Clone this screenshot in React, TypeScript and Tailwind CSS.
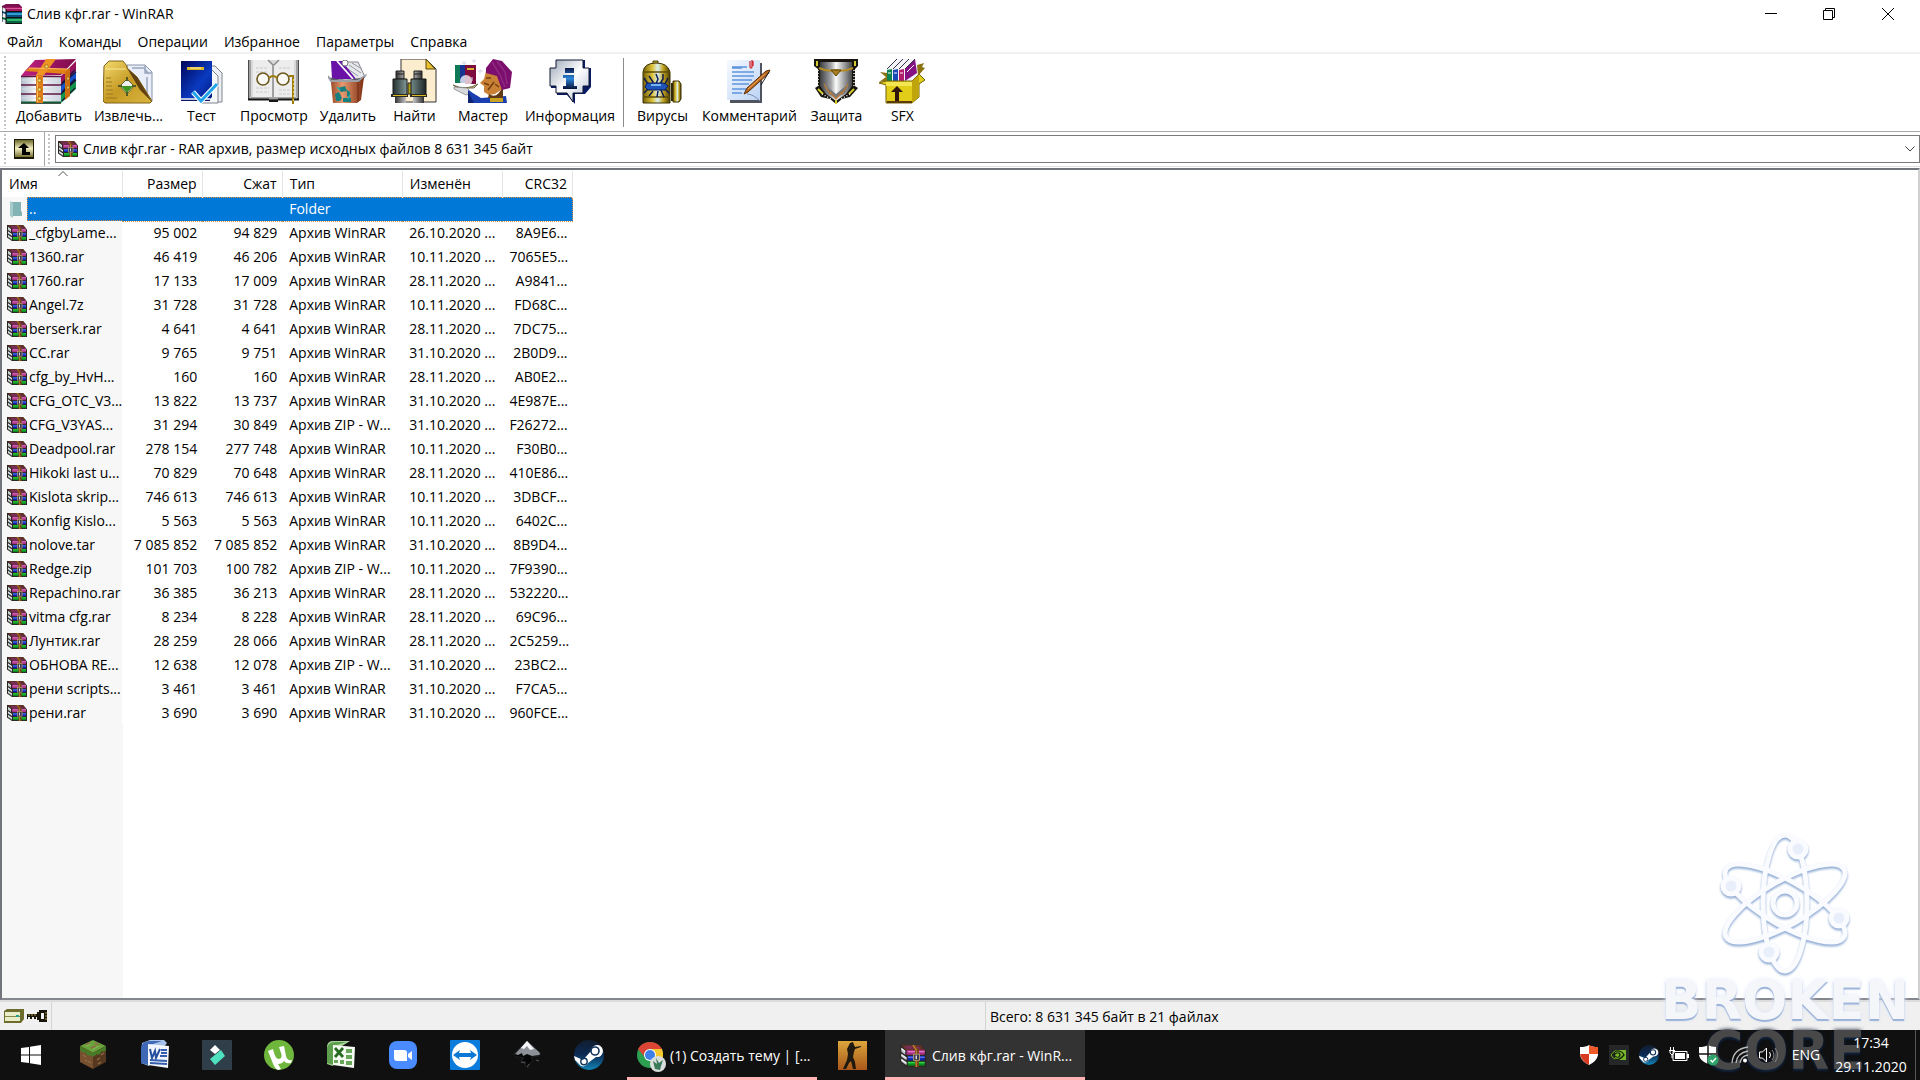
import { useState } from 'react'
import type { ReactNode } from 'react'

type Row = [name: string, size: string, packed: string, type: string, modified: string, crc: string]

const RAR = 'Архив WinRAR'
const ZIP = 'Архив ZIP - W...'

const ROWS: Row[] = [
  ['_cfgbyLame...', '95 002', '94 829', RAR, '26.10.2020 ...', '8A9E6...'],
  ['1360.rar', '46 419', '46 206', RAR, '10.11.2020 ...', '7065E5...'],
  ['1760.rar', '17 133', '17 009', RAR, '28.11.2020 ...', 'A9841...'],
  ['Angel.7z', '31 728', '31 728', RAR, '10.11.2020 ...', 'FD68C...'],
  ['berserk.rar', '4 641', '4 641', RAR, '28.11.2020 ...', '7DC75...'],
  ['CC.rar', '9 765', '9 751', RAR, '31.10.2020 ...', '2B0D9...'],
  ['cfg_by_HvH...', '160', '160', RAR, '28.11.2020 ...', 'AB0E2...'],
  ['CFG_OTC_V3...', '13 822', '13 737', RAR, '31.10.2020 ...', '4E987E...'],
  ['CFG_V3YAS...', '31 294', '30 849', ZIP, '31.10.2020 ...', 'F26272...'],
  ['Deadpool.rar', '278 154', '277 748', RAR, '10.11.2020 ...', 'F30B0...'],
  ['Hikoki last u...', '70 829', '70 648', RAR, '28.11.2020 ...', '410E86...'],
  ['Kislota skrip...', '746 613', '746 613', RAR, '10.11.2020 ...', '3DBCF...'],
  ['Konfig Kislo...', '5 563', '5 563', RAR, '10.11.2020 ...', '6402C...'],
  ['nolove.tar', '7 085 852', '7 085 852', RAR, '31.10.2020 ...', '8B9D4...'],
  ['Redge.zip', '101 703', '100 782', ZIP, '10.11.2020 ...', '7F9390...'],
  ['Repachino.rar', '36 385', '36 213', RAR, '28.11.2020 ...', '532220...'],
  ['vitma cfg.rar', '8 234', '8 228', RAR, '28.11.2020 ...', '69C96...'],
  ['Лунтик.rar', '28 259', '28 066', RAR, '28.11.2020 ...', '2C5259...'],
  ['ОБНОВА RE...', '12 638', '12 078', ZIP, '31.10.2020 ...', '23BC2...'],
  ['рени scripts...', '3 461', '3 461', RAR, '31.10.2020 ...', 'F7CA5...'],
  ['рени.rar', '3 690', '3 690', RAR, '31.10.2020 ...', '960FCE...'],
]

const MENU = ['Файл', 'Команды', 'Операции', 'Избранное', 'Параметры', 'Справка']

const COLUMNS = [
  { title: 'Имя', cls: 'w-[120px] text-left' },
  { title: 'Размер', cls: 'w-20 text-right' },
  { title: 'Сжат', cls: 'w-20 text-right' },
  { title: 'Тип', cls: 'w-[120px] text-left' },
  { title: 'Изменён', cls: 'w-[100px] text-left' },
  { title: 'CRC32', cls: 'w-[70px] text-right' },
]

const CELL = 'pl-[7px] pr-[5px] py-0'
const FOCUS = 'border-y border-dotted border-[#e08a3c]'

function TitleIcon() {
  return (
    <svg width="20" height="20" viewBox="0 0 20 20">
      <path d="M0 2 4 0h13l3 3v3L4 7 0 4z" fill="#7b0f4f" />
      <path d="M4 3h16v4H4z" fill="#a3195f" />
      <path d="M4 4h16v1H4z" fill="#d65a9a" />
      <path d="M0 7 4 8h16v5H5L0 11z" fill="#0b4d80" />
      <path d="M5 9h15v2H5z" fill="#2f9fd0" />
      <path d="M0 13 4 14h16v5H5L0 17z" fill="#06633f" />
      <path d="M5 15h15v2H5z" fill="#35b774" />
      <path d="M0 3 4 5v3L1 7zM0 9l4 1v3l-3-1zM0 15l4 1v4l-4-2z" fill="#e8edf2" />
      <path d="M0 2v16M4 5v15M4 7.500h16M4 13.500h16M4 19.500h16" stroke="#111" fill="none" />
    </svg>
  )
}

function ArchiveIcon({ className = 'w-5 h-[18px]' }: { className?: string }) {
  return (
    <svg className={className} viewBox="0 0 20 18" preserveAspectRatio="none">
      <path d="M0 0h16l4 5v13H5L0 14z" fill="#2b2622" />
      <path d="M1 0h15l3 4H4z" fill="#5c3226" />
      <path d="M3 1h11l2 2H5z" fill="#7d2c5a" />
      <path d="M5 4h14v4H5z" fill="#a82f86" />
      <path d="M6 5h13v1H6z" fill="#e583c8" />
      <path d="M6 9h13v3.500H6z" fill="#1226b8" />
      <path d="M6 9.500h13v1H6z" fill="#6089f2" />
      <path d="M6 13.500h13V17H6z" fill="#0a8a1c" />
      <path d="M6 14h13v1H6z" fill="#3be04c" />
      <path d="M1 2l3 2.500V8L1 5.500zM1 7l4 3v2.500L1 9.700zM1 11l4 3v2.500l-4-3z" fill="#b9bec7" />
      <path d="M1 3l3 2.500M1 8l4 3M1 12l4 3" stroke="#f4f6f8" strokeWidth=".8" />
      <path d="M9 0h3l2.500 4v14h-3V4z" fill="#74451a" />
      <path d="M10 0l2.500 4v14" fill="none" stroke="#c48632" strokeWidth=".9" />
      <rect x="10.500" y="7.500" width="4.500" height="5" fill="#3a3550" stroke="#b8a870" strokeWidth=".7" />
      <path d="M12.500 8.500v3" stroke="#eee" />
    </svg>
  )
}

function AddIcon() {
  return (
    <svg width="56" height="45" viewBox="0 0 56 45">
      <defs>
        <linearGradient id="pages" x1="0" x2="1"><stop offset="0" stopColor="#aebac8" /><stop offset=".4" stopColor="#fff" /><stop offset="1" stopColor="#c9d1dc" /></linearGradient>
        <linearGradient id="cover" x1="0" x2="1"><stop offset="0" stopColor="#c02083" /><stop offset="1" stopColor="#7d0b49" /></linearGradient>
      </defs>
      <path d="M0 17h40v27H0z" fill="url(#pages)" />
      <path d="M40 17 55 2v12L40 27z" fill="#98115b" />
      <path d="M40 26 55 12v9L40 35z" fill="#1651c8" />
      <path d="M40 35 55 21v9L40 44z" fill="#13944c" />
      <path d="M40 26 55 13M40 35 55 21M41 24l13-13M41 33l13-13M41 42l13-13" stroke="#15173a" strokeWidth="1.200" />
      <path d="M0 17 4 12 14 1 55 0 40 16z" fill="url(#cover)" />
      <path d="M4 12 8 9l40 1-4 5z" fill="#e28319" />
      <path d="M25 0h10L23 16h-8z" fill="#ee9424" />
      <path d="M8 9l38 1" stroke="#ffbf5e" />
      <path d="M0 17.500h40M0 26h40M0 35h40M0 44h40" stroke="#5d1943" strokeWidth="1.600" />
      <path d="M0 43.500h40" stroke="#0d5c31" strokeWidth="2" />
      <path d="M1 21h38M1 30h38M1 39h38" stroke="#d6dde6" />
      <path d="M15 16h7v28h-7z" fill="#e1801a" />
      <path d="M16.500 17v26" stroke="#ffc15c" />
      <path d="M44 13l5-4v28l-5 4z" fill="#cb6f12" />
      <path d="M17 20h3v3h-3zM17 29h3v3h-3zM17 38h3v3h-3zM24 6h3v3h-3zM46 18h2v3h-2zM46 27h2v3h-2z" fill="#ffe56b" stroke="#85500c" strokeWidth=".6" />
    </svg>
  )
}

function ExtractIcon() {
  return (
    <svg width="50" height="44" viewBox="0 0 50 44">
      <defs>
        <linearGradient id="fold" x1="0" y1="0" x2="1" y2="1"><stop offset="0" stopColor="#f4dc70" /><stop offset=".5" stopColor="#c69a24" /><stop offset="1" stopColor="#d8b640" /></linearGradient>
      </defs>
      <path d="M24 5h18l7 7v29H24z" fill="#e9eef8" stroke="#8793ac" />
      <path d="M29 8h12l5 6M42 5v8h7M44 17v22" fill="none" stroke="#9aa6bd" strokeWidth="1.500" />
      <path d="M1 6 6 1h14l4 5v2l10 9 15 24-2 2H2l-2-2z" fill="url(#fold)" stroke="#816018" />
      <path d="M24 8l10 9 15 25-12-12z" fill="#604010" />
      <path d="M2 9h21" stroke="#f8e89a" />
      <path d="M3 18h5M3 22h6M3 26h6M3 30h7M3 34h7M3 38h11" stroke="#9a7a20" />
      <path d="M24 19l7 7-7 8-7-8z" fill="#eee" stroke="#5d6630" />
      <path d="M18 26h12l-6 7z" fill="#3f941f" />
      <path d="M24 17v4M24 32v4M15 26h4M29 26h4" stroke="#555a24" strokeWidth="2" />
    </svg>
  )
}

function TestIcon() {
  return (
    <svg width="42" height="44" viewBox="0 0 42 44">
      <defs>
        <linearGradient id="blue" x1="0" y1="0" x2="1" y2="1"><stop offset="0" stopColor="#00045a" /><stop offset=".6" stopColor="#0a3bc0" /><stop offset="1" stopColor="#001880" /></linearGradient>
      </defs>
      <path d="M24 6h10l7 7v29H24z" fill="#eceff4" stroke="#80838a" />
      <path d="M20 9h10l7 7v27H20z" fill="#f6f7fa" stroke="#80838a" />
      <path d="M0 1h31v36l-3 3H0z" fill="url(#blue)" />
      <path d="M0 38h29v2H0z" fill="#bcc5dd" />
      <path d="M0 40.500h29" stroke="#0b1763" />
      <path d="M6 7h17v3H6z" fill="#d9b72c" />
      <path d="M9 8h11" stroke="#fff3a6" />
      <path d="M12 32l8 9 16-17" fill="none" stroke="#fff" strokeWidth="5" />
      <path d="M12 32l8 9 16-17" fill="none" stroke="#21a3ec" strokeWidth="3" />
    </svg>
  )
}

function ViewIcon() {
  return (
    <svg width="52" height="45" viewBox="0 0 52 45">
      <path d="M0 1h51v40H0z" fill="#4b4b4d" />
      <path d="M3 1h45v37H3z" fill="#d8d8da" />
      <path d="M5 1h15l5 4v33H5zM46 1H31l-5 4v33h20z" fill="#ededee" />
      <path d="M20 1l5 5v32M31 1l-5 5" fill="none" stroke="#8b8b8e" strokeWidth="1.500" />
      <path d="M8 9h11M8 13h11M8 29h13M8 33h13M31 9h12M31 31h12M31 35h12" stroke="#cbcbce" strokeDasharray="3 1" />
      <path d="M2 1v38h47V1" fill="none" stroke="#f8f8f8" />
      <path d="M0 40.500h21M30 40.500h21" stroke="#161616" strokeWidth="2" />
      <path d="M21 42h9" stroke="#161616" strokeWidth="2" />
      <circle cx="15" cy="20" r="6" fill="#f8f8f4" stroke="#6c571d" strokeWidth="1.600" />
      <circle cx="35" cy="20" r="6" fill="#f8f8f4" stroke="#6c571d" strokeWidth="1.600" />
      <path d="M21 19q4-4 8 0M41 17h4v28" fill="none" stroke="#9c7c0e" strokeWidth="2" />
      <path d="M45.500 20v24" stroke="#e3c63a" strokeDasharray="2 2" />
    </svg>
  )
}

function DeleteIcon() {
  return (
    <svg width="40" height="44" viewBox="0 0 40 44">
      <defs>
        <linearGradient id="bin" x1="0" x2="1"><stop offset="0" stopColor="#9c4a28" /><stop offset=".35" stopColor="#e79a70" /><stop offset="1" stopColor="#7c2d10" /></linearGradient>
      </defs>
      <path d="M16 2l14 0 7 15-9 4H14z" fill="#e6e8ec" stroke="#85878d" />
      <path d="M21 5l12 8M20 9l10 7M24 3l10 6" stroke="#9699a0" />
      <path d="M3 1h11l14 18H4z" fill="#6a12a8" />
      <path d="M9 1l16 18" stroke="#fff" strokeWidth="1.800" />
      <circle cx="17" cy="3" r="3" fill="#fff" stroke="#777" />
      <path d="M0 17q18 6 38-1l1-3-5 9-3 2H4z" fill="#5c5d63" />
      <path d="M0 16l3 5h27l8-6" fill="none" stroke="#9ea0a8" strokeWidth="2" />
      <path d="M3 22h28l5-5-3 23-4 3H5z" fill="url(#bin)" />
      <path d="M30 22v20" stroke="#6a2a12" />
      <path d="M10 28l7-2 2 5-6 1zM7 34l4-2 3 6-2 3H8zM15 38h8v4h-8zM19 30l3 2v6l-3-2z" fill="#17807e" />
      <path d="M9 27l3 3M20 39l2-4" stroke="#2ab3ae" strokeWidth="1.500" />
    </svg>
  )
}

function FindIcon() {
  return (
    <svg width="46" height="45" viewBox="0 0 46 45">
      <defs>
        <linearGradient id="tube" x1="0" x2="1"><stop offset="0" stopColor="#24302f" /><stop offset=".45" stopColor="#86a09d" /><stop offset="1" stopColor="#1b2423" /></linearGradient>
        <linearGradient id="steel" x1="0" x2="1"><stop offset="0" stopColor="#333" /><stop offset=".5" stopColor="#f0f0f0" /><stop offset="1" stopColor="#333" /></linearGradient>
      </defs>
      <path d="M10 0h25l10 10v33H10z" fill="#fbedcd" stroke="#333" />
      <path d="M35 0l9 10h-9z" fill="#e8c12c" stroke="#594814" />
      <path d="M5 12h8v8H5zM23 12h8v8h-8z" fill="url(#steel)" stroke="#222" />
      <path d="M17 24h4v11h-4z" fill="#b3a215" stroke="#222" />
      <path d="M2 20h14v16H2zM20 20h15v16H20z" fill="url(#tube)" stroke="#161616" />
      <path d="M0 35h17v3H0zM19 35h17v3H19z" fill="#2a2a22" />
      <path d="M2 36.500h14M21 36.500h14" stroke="#d8b824" />
      <path d="M4 38h11v6H4zM22 38h11v6H22z" fill="url(#steel)" />
      <path d="M5 15h8M23 15h8" stroke="#222" />
    </svg>
  )
}

function WizardIcon() {
  return (
    <svg width="60" height="45" viewBox="0 0 60 45">
      <path d="M2 6h5v18H2z" fill="#0f7a58" />
      <path d="M7 6h5v18H7z" fill="#173493" />
      <path d="M12 6h11v19H12z" fill="#7d0b3e" />
      <path d="M14 10h7" stroke="#d7b32b" strokeWidth="2" />
      <path d="M0 26q13 6 25-1l-4 4H5z" fill="#c8b78c" stroke="#776a4a" />
      <circle cx="13" cy="22" r="6" fill="#fff" opacity=".75" />
      <path d="M1 28l13 1 5 5-6 2-12-6z" fill="#d8d9dd" stroke="#84868c" strokeWidth=".8" />
      <path d="M15 31l13 8 25-2 1 7H15z" fill="#1a3fae" />
      <path d="M15 32l6 12h-6z" fill="#0f2474" />
      <path d="M33 12l-2 8-4 4 4 3v6l5 3 6-1 9-6-4-14z" fill="#cb8135" />
      <path d="M31 24l5 2M35 31l6-8M33 19h5M42 25l4 3" stroke="#70400f" strokeWidth="1.500" />
      <path d="M36 35q8 6 14-8v12H35z" fill="#5f3a15" />
      <path d="M37 39h13v4H37z" fill="#c9a222" />
      <path d="M33 9l7-9 9 2 10 11-2 16-8 2-5-14-11-3z" fill="#7c0f6e" />
      <path d="M39 3l8 13 5 12M44 2l8 11 2 12" fill="none" stroke="#8f2a80" strokeWidth="1.500" />
      <path d="M11 2v4M9 4h4M21 0v4M19 2h4M27 10v5M25 12h5M19 18v4" stroke="#d5d8e6" />
    </svg>
  )
}

function InfoIcon() {
  return (
    <svg width="42" height="45" viewBox="0 0 42 45">
      <defs>
        <linearGradient id="bubble" x1="0" x2="1" y2="1"><stop offset="0" stopColor="#9aa6b6" /><stop offset=".5" stopColor="#fff" /><stop offset="1" stopColor="#b4c0d0" /></linearGradient>
        <linearGradient id="ink" y1="0" y2="1" x2="0"><stop offset="0" stopColor="#0b1648" /><stop offset=".5" stopColor="#2d86d8" /><stop offset="1" stopColor="#081238" /></linearGradient>
      </defs>
      <path d="M8 1h28v8h6v19l-6 7H26v10l-8-9H8v-7H2V9h6z" fill="#081a64" />
      <path d="M7 1h27v8h6v18h-6v7H24v9l-6-9H7v-7H1V9h6z" fill="url(#bubble)" stroke="#111833" />
      <path d="M16 9h9v5h-9zM14 16h11v11h3v3H14v-3h3v-8h-3z" fill="url(#ink)" />
    </svg>
  )
}

function VirusIcon() {
  return (
    <svg width="40" height="45" viewBox="0 0 40 45">
      <defs>
        <linearGradient id="can" x1="0" x2="1"><stop offset="0" stopColor="#756008" /><stop offset=".35" stopColor="#dfc43b" /><stop offset=".55" stopColor="#d8f0f4" /><stop offset=".75" stopColor="#c3a31c" /><stop offset="1" stopColor="#493c05" /></linearGradient>
      </defs>
      <path d="M11 2h5v3h-5z" fill="#c6ab2c" stroke="#4b3e06" />
      <path d="M1 13q1-9 13-9t14 9v31H1z" fill="url(#can)" stroke="#3a3004" />
      <path d="M1 13h27M1 38h27" stroke="#5e4e0a" strokeWidth="1.500" />
      <path d="M31 22h6l2 3v15l-2 3h-6z" fill="url(#can)" stroke="#3a3004" />
      <path d="M29 24h2v18h-2z" fill="#332b08" />
      <path d="M7 17l4 6-1 4M14 15l2 5-2 5M21 15l0 5-3 5M7 37l4-5M15 38l1-6M22 38l-3-7M2 19l4 6M2 34l4-4M26 19l-3 6M27 34l-4-4" fill="none" stroke="#0b1a55" strokeWidth="1.500" />
      <path d="M5 24h17l4 3-3 4H6l-3-3z" fill="#1f55b8" stroke="#081a5c" />
      <path d="M9 26h10" stroke="#75b3f3" strokeWidth="2" />
    </svg>
  )
}

function CommentIcon() {
  return (
    <svg width="44" height="45" viewBox="0 0 44 45">
      <defs>
        <linearGradient id="sheet" x1="0" x2="1" y2="1"><stop offset="0" stopColor="#f7faff" /><stop offset="1" stopColor="#bcd4f6" /></linearGradient>
      </defs>
      <path d="M3 4h32v40H3z" fill="#50545e" />
      <path d="M0 1h33v40H0z" fill="url(#sheet)" />
      <path d="M5 8h15M5 9h10M5 13h22M5 17h22M5 21h20M5 25h17M5 30h14M5 34h10" stroke="#5d94de" strokeWidth="1.300" />
      <path d="M23 2v6q1 2 2 0V1M26 2v5" fill="none" stroke="#d22b35" strokeWidth="1.300" />
      <path d="M17 35l3-6 19-17 4-1-2 4-20 18z" fill="#b96820" stroke="#5a2d08" />
      <path d="M21 30l17-15" stroke="#f0ac62" />
      <path d="M42 13l-8 13" stroke="#222" />
      <path d="M20 35q6 0 13 7" stroke="#7c8fae" fill="none" />
    </svg>
  )
}

function ProtectIcon() {
  return (
    <svg width="44" height="45" viewBox="0 0 44 45">
      <defs>
        <linearGradient id="shield" x1="0" x2="1"><stop offset="0" stopColor="#3c3d3f" /><stop offset=".35" stopColor="#a4a6a9" /><stop offset=".5" stopColor="#fbfbfb" /><stop offset="1" stopColor="#47484a" /></linearGradient>
      </defs>
      <path d="M0 0h44v7l-3 3v17l3 2-8 9-8 2-6 5-6-5-9-2-6-9 3-2V10L0 7z" fill="#17150e" />
      <path d="M6 3h32v24l-6 8-10 7-10-7-6-8z" fill="url(#shield)" />
      <path d="M3 2v5M41 2v5M4 30l5 5M40 30l-5 5M22 41v4" stroke="#d5c92e" strokeWidth="2" />
      <path d="M4 11v16M40 11v16M8 35l9 5M36 35l-9 5" stroke="#eee" strokeDasharray="1 2" strokeWidth="1.500" />
      <path d="M5 9q9 4 17 2 8 2 17-2" fill="none" stroke="#b68d22" strokeWidth="2" />
      <path d="M17 11h10l-5 6z" fill="#aa8120" stroke="#57400a" />
      <path d="M10 25l12 10 12-10-3 9-9 5-9-5z" fill="#77787c" />
      <path d="M10 25l6 10M34 25l-6 10M16 33l6 7 6-7" fill="none" stroke="#b97836" strokeWidth="1.400" />
    </svg>
  )
}

function SfxIcon() {
  return (
    <svg width="46" height="45" viewBox="0 0 46 45">
      <path d="M8 9l10-9h18l2 4v18H8z" fill="#f4f4f8" />
      <path d="M8 11l5-1v13H8z" fill="#0f8450" />
      <path d="M14 11l5-1v13h-5z" fill="#1c49b8" />
      <path d="M20 11l5-1v13h-5z" fill="#b11c6c" />
      <path d="M26 10l10-10 2 14-12 8z" fill="#851283" />
      <path d="M8 10l10-10M14 10L24 0M20 10L30 0M26 10L36 0" stroke="#34344c" />
      <path d="M9 14h3M15 14h3M21 14h3M28 13l7-7" stroke="#fff" />
      <path d="M0 23l8-1v-8l-7-1 6 5zM38 6l7-2-2 4 3 1-7 8z" fill="#8d7212" />
      <path d="M0 24l7-2h26l7-7 6 6-6 4v13l-7 6H7V26z" fill="#e2cd18" stroke="#75650a" />
      <path d="M33 22l7-6v22l-7 6z" fill="#c0a40c" />
      <path d="M7 23h26v4H7z" fill="#f4e650" />
      <path d="M8 43h25" stroke="#5b3b07" strokeWidth="2" />
      <path d="M18 27l6 6h-4v9h-4v-9h-4z" fill="#30150a" />
    </svg>
  )
}

const TOOLS: { label: string; icon: ReactNode }[] = [
  { label: 'Добавить', icon: <AddIcon /> },
  { label: 'Извлечь...', icon: <ExtractIcon /> },
  { label: 'Тест', icon: <TestIcon /> },
  { label: 'Просмотр', icon: <ViewIcon /> },
  { label: 'Удалить', icon: <DeleteIcon /> },
  { label: 'Найти', icon: <FindIcon /> },
  { label: 'Мастер', icon: <WizardIcon /> },
  { label: 'Информация', icon: <InfoIcon /> },
]

const EXTRA_TOOLS: { label: string; icon: ReactNode }[] = [
  { label: 'Вирусы', icon: <VirusIcon /> },
  { label: 'Комментарий', icon: <CommentIcon /> },
  { label: 'Защита', icon: <ProtectIcon /> },
  { label: 'SFX', icon: <SfxIcon /> },
]

function ToolButton({ label, icon }: { label: string; icon: ReactNode }) {
  return (
    <button className="flex flex-col items-center min-w-[65px] px-1.5 pt-[5px]">
      <span className="h-[45px] w-full flex items-end justify-center">{icon}</span>
      <span className="leading-5 mt-0.5 whitespace-nowrap">{label}</span>
    </button>
  )
}

function Grip() {
  return <div className="w-0.5 self-stretch my-0.5 bg-[repeating-linear-gradient(to_bottom,#c4c4c4_0,#c4c4c4_2px,#fff_2px,#fff_4px)]" />
}

function SteamIcon({ size }: { size: number }) {
  return (
    <svg width={size} height={size} viewBox="0 0 30 30">
      <defs>
        <linearGradient id="steam" x2="0" y2="1"><stop offset="0" stopColor="#111d2e" /><stop offset=".5" stopColor="#0b2a55" /><stop offset="1" stopColor="#1287b8" /></linearGradient>
      </defs>
      <circle cx="15" cy="15" r="15" fill="url(#steam)" />
      <path d="M0 16l9 4 8-9a6 6 0 1 1 5 6l-8 6a5 5 0 0 1-9 1L1 20z" fill="#fff" />
      <circle cx="21" cy="11" r="4" fill="#fff" stroke="#12335c" strokeWidth="1.600" />
      <circle cx="10" cy="21.500" r="3.200" fill="none" stroke="#12335c" strokeWidth="1.400" />
    </svg>
  )
}

const PINNED: { label: string; icon: ReactNode }[] = [
  {
    label: 'Minecraft',
    icon: (
      <svg width="28" height="30" viewBox="0 0 28 30">
        <path d="M14 0l13 6-13 7L1 6z" fill="#6aa33e" />
        <path d="M1 6l13 7v16L1 22z" fill="#76502f" />
        <path d="M27 6l-13 7v16l13-7z" fill="#563820" />
        <path d="M1 6l13 7v4l-3-2-2 1-3-4-2 1-3-3zM27 6l-13 7v4l4-3 2 1 3-4 2 1 2-2z" fill="#487a27" />
        <path d="M7 5l4-2M12 8l5-2M16 3l4 2M4 15l3 2M9 21l3 2M6 20l2 1M18 20l3-2M22 15l3-2M19 24l3-2" stroke="#8e6b45" strokeWidth="1.500" />
        <path d="M7 6l5-2M14 9l6-3" stroke="#85bd55" />
      </svg>
    ),
  },
  {
    label: 'Word',
    icon: (
      <svg width="30" height="30" viewBox="0 0 30 30">
        <path d="M2 3l8-3h14l3 3-18 23-8-3z" fill="#a8c1e8" />
        <path d="M1 9q0-8 9-8l12 0-12 4-2 20-7-2z" fill="#3f69b7" />
        <path d="M8 4l21 2-1 22L8 25z" fill="#f2f6fc" />
        <path d="M10 9l2 9 3-7 1 7 4-9" fill="none" stroke="#26509f" strokeWidth="2" />
        <path d="M21 10h6M21 13h6M20 16h7M10 20l17 1M10 23l17 1" stroke="#355fae" strokeWidth="1.800" />
      </svg>
    ),
  },
  {
    label: 'Filmora',
    icon: (
      <svg width="30" height="30" viewBox="0 0 30 30">
        <rect width="30" height="30" rx="1" fill="#303e4a" />
        <path d="M13 5l5 5-5 4-5-4z" fill="#fff" />
        <path d="M19 10l4 6-10 9-5-6z" fill="#4fe2c0" />
      </svg>
    ),
  },
  {
    label: 'uTorrent',
    icon: (
      <svg width="30" height="30" viewBox="0 0 30 30">
        <circle cx="15" cy="15" r="15" fill="#6fb63d" />
        <path d="M4 11l5-2q2 10 6 10 4-1 2-6l-2-6 5-1 2 10q1 5 6 4l-1 3q-5 1-7-2-2 3-6 3l3 5-3 1q-4-2-6-9z" fill="#fff" />
      </svg>
    ),
  },
  {
    label: 'Excel',
    icon: (
      <svg width="30" height="30" viewBox="0 0 30 30">
        <path d="M1 6q1-5 6-5h17l-8 5-9 20-6-2z" fill="#a9d49b" />
        <path d="M1 10q0-8 8-8h11L8 6v19l-7-2z" fill="#5d9e4c" />
        <path d="M7 5l22 2-1 21-21-3z" fill="#f4faf2" />
        <path d="M9 8l8 9M17 8l-8 9" stroke="#276a22" strokeWidth="2.800" />
        <path d="M20 9h6v4h-6zM20 15h6v4h-6zM20 21h6v4h-6zM14 20h4v4h-4zM8 20h4v3H8z" fill="#69a75b" />
      </svg>
    ),
  },
  {
    label: 'Zoom',
    icon: (
      <svg width="30" height="30" viewBox="0 0 30 30">
        <rect x="1" y="1" width="28" height="28" rx="8" fill="#4a8cff" />
        <path d="M6 10h10q3 0 3 3v8H9q-3 0-3-3zM20 14l4-3v9l-4-3z" fill="#fff" />
      </svg>
    ),
  },
  {
    label: 'TeamViewer',
    icon: (
      <svg width="30" height="30" viewBox="0 0 30 30">
        <rect width="30" height="30" rx="1" fill="#0b7bdc" />
        <circle cx="15" cy="15" r="13" fill="#fff" />
        <path d="M3 15l7-5-1 3h12l-1-3 7 5-7 5 1-3H9l1 3z" fill="#0b78d6" />
      </svg>
    ),
  },
  {
    label: 'Inkscape',
    icon: (
      <svg width="28" height="30" viewBox="0 0 28 30">
        <path d="M14 1L1 14q0 3 5 3l5 1-3 3 5 1-1 4 3 2 2-5 3-2-2-4 7-1q4-1 2-3z" fill="#050506" stroke="#2c2d30" strokeWidth=".6" />
        <path d="M14 1L2 14l3 1 4-2 1 3 4-2 5 2 7-1q2-1 0-3z" fill="#8e9097" />
        <path d="M14 1l-6 7 3 1 3-3 3 4 4-1z" fill="#f5f6f8" />
        <path d="M8 22l4 1M23 20l3 1M14 27l2-3" stroke="#55575c" />
      </svg>
    ),
  },
  { label: 'Steam', icon: <SteamIcon size={30} /> },
]

function Watermark() {
  return (
    <div aria-hidden className="absolute right-[11px] bottom-1 flex flex-col items-center pointer-events-none font-['DejaVu_Sans'] font-bold text-[53px] leading-[50px]">
      <svg width="134" height="148" viewBox="-67 -75 134 148" className="drop-shadow-[0_2px_1px_#8fabd4]">
        <g fill="none" stroke="#fafbff" strokeWidth="5">
          <ellipse rx="22" ry="68" />
          <ellipse rx="22" ry="68" transform="rotate(60)" />
          <ellipse rx="22" ry="68" transform="rotate(-60)" />
          <circle r="12" />
          <g fill="#e9eefb">
            <circle cx="13" cy="-54" r="8" />
            <circle cx="-54" cy="-17" r="8" />
            <circle cx="54" cy="15" r="8" />
            <circle cx="-16" cy="49" r="8" />
          </g>
        </g>
      </svg>
      <span className="text-[#f5f6f9] [text-shadow:0_2px_1px_#98b1d8,0_0_5px_#dfe6fa]">BROKEN</span>
      <span className="text-[#484848] [text-shadow:0_2px_2px_#11233c,0_0_4px_#0c1a30]">CORE</span>
    </div>
  )
}

function Tray() {
  return (
    <div className="flex items-center text-white">
      <div className="flex items-center gap-2.5">
        <svg width="18" height="20" viewBox="0 0 18 20" className="mr-px">
          <path d="M0 2q6 0 9-2 3 2 9 2v8q-1 6-9 10-8-4-9-10z" fill="#fff" />
          <path d="M9 0q3 2 9 2v7H9z" fill="#f05a2b" />
          <path d="M0 9h9v11q-8-4-9-11z" fill="#d83a22" />
        </svg>
        <svg width="20" height="20" viewBox="0 0 20 20">
          <rect width="20" height="20" fill="#252729" />
          <rect x="6" y="5" width="11" height="10" fill="#76b82a" />
          <path d="M2 10q4-5 8-4 4 1 5 4-5 6-9 4-3-1-4-4zM5 10q3-3 5-2 2 2 0 4-3 1-5-2z" fill="none" stroke="#17200d" strokeWidth="1.200" />
          <path d="M2 10q2-3 4-4M2 10q1 3 4 4" fill="none" stroke="#76b82a" />
        </svg>
        <SteamIcon size={20} />
        <svg width="20" height="16" viewBox="0 0 20 16">
          <path d="M4 4.500h14v9H4z" fill="none" stroke="#fff" />
          <path d="M6 6h10v6H6zM18 7h2v4h-2z" fill="#fff" />
          <path d="M1.500 0v3M4.500 0v3M0 3.500h6M1 4v2l2 2 2-2V4M3 8v3" fill="none" stroke="#fff" />
        </svg>
        <svg width="20" height="21" viewBox="0 0 20 21">
          <path d="M0 2q6 0 9-2 3 2 8 2v8q-1 6-8 9Q1 16 0 10z" fill="#fff" />
          <path d="M9 0v19M0 9h17" stroke="#111" strokeWidth="1.500" />
          <circle cx="14" cy="15" r="5.500" fill="#2ea36a" />
          <path d="M11.500 15l2 2 3.500-4" fill="none" stroke="#fff" strokeWidth="1.400" />
        </svg>
        <svg width="18" height="18" viewBox="0 0 18 18" className="ml-0.5">
          <path d="M1 17Q2 3 17 1M5 17Q6 7 17 5M9 17q1-7 8-8" fill="none" stroke="#bbb" strokeWidth="1.300" />
          <circle cx="14" cy="14.500" r="2" fill="#fff" />
        </svg>
        <svg width="20" height="18" viewBox="0 0 20 18">
          <path d="M.5 6h3l4-4v14l-4-4h-3z" fill="none" stroke="#fff" />
          <path d="M10.500 6q2 3 0 6" fill="none" stroke="#fff" />
          <path d="M13 4q4 5 0 10M16 2q5 7 0 14" fill="none" stroke="#888" />
        </svg>
      </div>
      <span className="ml-3 w-[30px] text-center">ENG</span>
      <div className="ml-2.5 w-[80px] text-center leading-6">
        <div>17:34</div>
        <div>29.11.2020</div>
      </div>
      <div className="ml-1 mr-1 h-[50px] w-px bg-[#555]" />
    </div>
  )
}

export default function App() {
  const [selected, setSelected] = useState(-1)

  return (
    <div className="relative min-h-screen flex flex-col bg-white text-black text-[14px] leading-5 font-['Open_Sans','Noto_Sans',sans-serif]">
      <header className="flex items-start justify-between h-7 pl-0.5">
        <div className="flex items-center gap-[5px] pt-1">
          <TitleIcon />
          <h1>Слив кфг.rar - WinRAR</h1>
        </div>
        <div className="flex h-7">
          <button aria-label="Свернуть" className="w-[58px] flex items-center justify-center">
            <svg width="12" height="12" viewBox="0 0 12 12"><path d="M0 5.500h12" stroke="#000" /></svg>
          </button>
          <button aria-label="Развернуть" className="w-[58px] flex items-center justify-center">
            <svg width="12" height="12" viewBox="0 0 12 12"><path d="M.5 2.500h9v9h-9zM2.500 2V.5h9v9H10" fill="none" stroke="#000" /></svg>
          </button>
          <button aria-label="Закрыть" className="w-[60px] mr-0.5 flex items-center justify-center">
            <svg width="12" height="12" viewBox="0 0 12 12"><path d="M0 0l12 12M12 0L0 12" stroke="#000" /></svg>
          </button>
        </div>
      </header>

      <nav className="flex gap-4 h-6 pl-[7px] items-center pt-1">
        {MENU.map(item => <button key={item}>{item}</button>)}
      </nav>

      <div className="flex border-t-2 border-[#f0f0f0] h-[79px] pl-1">
        <Grip />
        <div className="flex pl-1">
          {TOOLS.map(t => <ToolButton key={t.label} {...t} />)}
        </div>
        <div className="w-px bg-[#8c8c8c] my-1 ml-0.5 mr-1.5" />
        <div className="flex gap-px">
          {EXTRA_TOOLS.map(t => <ToolButton key={t.label} {...t} />)}
        </div>
      </div>

      <div className="flex border-t border-[#a8a8ac] border-b border-b-[#e0e0e0] h-9 pl-1">
        <Grip />
        <button aria-label="Вверх" className="ml-2 self-center">
          <svg width="20" height="20" viewBox="0 0 20 20">
            <defs>
              <linearGradient id="up" y1="0" y2="1" x2="0"><stop offset="0" stopColor="#6f6a2c" /><stop offset=".5" stopColor="#f5efc0" /><stop offset="1" stopColor="#777133" /></linearGradient>
            </defs>
            <rect width="20" height="20" fill="#1a1807" />
            <rect x="1" y="1" width="18" height="17" fill="url(#up)" />
            <path d="M10 4l5 5h-3v4h4v3H8V9H4z" fill="#000" />
          </svg>
        </button>
        <div className="ml-2.5 w-px bg-[#a8a8a8] mr-[3px]" />
        <Grip />
        <div className="flex-1 flex items-center ml-[5px] my-[3px] border border-[#7a7a7a] pl-0.5 pr-1">
          <ArchiveIcon className="w-5 h-4" />
          <select aria-label="Путь" className="flex-1 appearance-none bg-transparent outline-none pl-[5px] text-black">
            <option>Слив кфг.rar - RAR архив, размер исходных файлов 8 631 345 байт</option>
          </select>
          <svg width="10" height="6" viewBox="0 0 10 6"><path d="M.5.5l4.500 4.500L9.500.5" fill="none" stroke="#444" /></svg>
        </div>
      </div>

      <main className="flex-1 mt-px border-2 border-[#73757c] border-r-[#d0d0d0] border-b-[#85878e] bg-[linear-gradient(to_right,#f7f7f7_121px,#fff_121px)]">
        <div className="bg-white pt-px">
          <table className="table-fixed w-[571px] border-collapse">
            <thead>
              <tr className="h-[26px] bg-white">
                {COLUMNS.map(c => (
                  <th key={c.title} className={`${c.cls} relative font-normal pl-[7px] pr-[5px] border-r border-[#e5e5e5]`}>
                    {c.title}
                    {c.title === 'Имя' && (
                      <svg className="absolute left-14 top-0" width="10" height="6" viewBox="0 0 10 6">
                        <path d="M.5 5L5 .5 9.500 5" fill="none" stroke="#555" />
                      </svg>
                    )}
                  </th>
                ))}
              </tr>
            </thead>
            <tbody className="whitespace-nowrap">
              <tr className="h-6 bg-[#0078d7] text-white" onClick={() => setSelected(-1)}>
                <td className="p-0">
                  <div className="flex h-6">
                    <span className="w-[25px] bg-[#f7f7f7] pl-[7px] pt-1 shrink-0">
                      <svg width="14" height="18" viewBox="0 0 14 18">
                        <path d="M1 1h11v9l1 1v4H4z" fill="#83b3b5" />
                        <path d="M1 0l3 2v15l-3-2z" fill="#a5cbcb" />
                      </svg>
                    </span>
                    <span className="flex-1 border-y border-l border-dotted border-[#e08a3c] pl-px leading-[22px]">..</span>
                  </div>
                </td>
                <td className={FOCUS} />
                <td className={FOCUS} />
                <td className={`${FOCUS} ${CELL}`}>Folder</td>
                <td className={FOCUS} />
                <td className={`${FOCUS} border-r`} />
              </tr>
              {ROWS.map(([name, size, packed, type, modified, crc], i) => (
                <tr key={name} onClick={() => setSelected(i)} className={`h-6 ${selected === i ? 'bg-[#cce8ff]' : 'bg-white'}`}>
                  <td className="p-0 bg-[#f7f7f7]">
                    <div className="flex items-center pl-[5px] gap-0.5">
                      <ArchiveIcon className="w-5 h-4 shrink-0" />
                      {name}
                    </div>
                  </td>
                  <td className={`${CELL} text-right`}>{size}</td>
                  <td className={`${CELL} text-right`}>{packed}</td>
                  <td className={CELL}>{type}</td>
                  <td className={CELL}>{modified}</td>
                  <td className={`${CELL} text-right`}>{crc}</td>
                </tr>
              ))}
            </tbody>
          </table>
        </div>
      </main>

      <div className="flex justify-between h-[30px] border-t-2 border-[#dcdcdc] bg-[#f0f0f0]">
        <div className="flex items-center gap-[3px] w-[52px] pl-1 border-r border-[#d4d4d4] shrink-0">
          <svg width="20" height="14" viewBox="0 0 20 14">
            <path d="M0 2l3-2h17v10l-3 4H0z" fill="#6d6c2c" />
            <path d="M1 3h15v9H1z" fill="#e9edc8" />
            <path d="M1 7.500h15" stroke="#85864a" />
            <path d="M12 6h3v2h-3z" fill="#22a08a" />
          </svg>
          <svg width="20" height="12" viewBox="0 0 20 12">
            <path d="M0 4h10V2h2V0h8v12h-8v-2h-2V7H9v2H7V7H5v2H3V7H1v2H0z" fill="#17150a" />
            <path d="M14 3h3v6h-3z" fill="#f0f0f0" />
            <path d="M1 5h9M19 2v8" stroke="#a99b36" strokeDasharray="2 1" />
          </svg>
        </div>
        <div className="w-[48.7%] flex items-center border-l border-[#d4d4d4] pl-1 pt-px">Всего: 8 631 345 байт в 21 файлах</div>
      </div>

      <Watermark />

      <footer className="flex h-[50px] justify-between bg-[#101010] text-white">
        <div className="flex">
          <button aria-label="Пуск" className="w-[61px] flex items-center justify-center">
            <svg width="20" height="20" viewBox="0 0 20 20">
              <path d="M0 3l8-1v7.500H0zM9 1.800L20 0v9.500H9zM0 10.500h8V18l-8-1zM9 10.500h11V20L9 18.200z" fill="#fff" />
            </svg>
          </button>
          {PINNED.map(p => (
            <button key={p.label} aria-label={p.label} className="w-[62px] pl-0.5 flex items-center justify-center">{p.icon}</button>
          ))}
          <button className="ml-2 w-[190px] flex items-center gap-[3px] pl-[9px] pt-0.5 shadow-[inset_0_-3px_0_#ffb3b3]">
            <svg width="31" height="31" viewBox="0 0 31 31">
              <circle cx="14" cy="14" r="13" fill="#2d9f50" />
              <path d="M2 8q4-7 12-7 8 0 12 7H14q-6 1-6 7z" fill="#dc4436" />
              <path d="M26 8q3 8-2 14l-8 5 3-13-3-6z" fill="#f7c92e" />
              <circle cx="14" cy="14" r="6" fill="#fff" />
              <circle cx="14" cy="14" r="5" fill="#3f7fe8" />
              <circle cx="22" cy="23" r="8" fill="#d9dedb" />
              <path d="M17 20l4 3-1-6 3 5 4-3-2 6-1 4-5-1z" fill="#3b7a58" />
            </svg>
            <span className="whitespace-nowrap">(1) Создать тему | [...</span>
          </button>
          <button aria-label="CS:GO" className="w-[68px] flex items-center justify-center pl-0.5">
            <svg width="29" height="29" viewBox="0 0 29 29">
              <defs>
                <linearGradient id="cs" x2="0" y2="1"><stop offset="0" stopColor="#dca63c" /><stop offset="1" stopColor="#a9571a" /></linearGradient>
              </defs>
              <rect width="29" height="29" fill="url(#cs)" />
              <path d="M12 2l3-1 1 3 1 2 6-1v1l-6 2-1 3-1 5 2 5 1 7h-3l-2-8-2 2-3 6H5l4-9 1-6-1-5z" fill="#20190f" />
            </svg>
          </button>
          <button className="w-[200px] flex items-center gap-1.5 pl-[15px] pt-0.5 bg-[#333] shadow-[inset_0_-3px_0_#ffb3b3]">
            <ArchiveIcon className="w-[26px] h-[22px]" />
            <span className="whitespace-nowrap">Слив кфг.rar - WinR...</span>
          </button>
        </div>
        {/* painted above the watermark */}
        <div className="relative"><Tray /></div>
      </footer>
    </div>
  )
}
